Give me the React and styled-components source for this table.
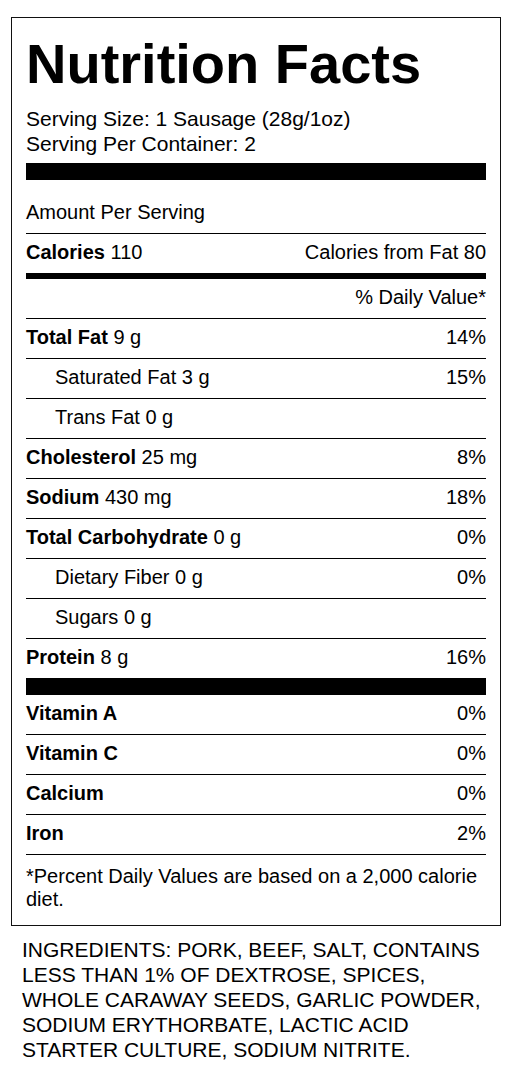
import React from 'react';
import styled, { createGlobalStyle } from 'styled-components';

const GlobalStyle = createGlobalStyle`
    html, body {
        margin: 0;
        padding: 0;
        background: #fff;
    }
    body {
        font-family: "Liberation Sans", Arial, sans-serif;
        color: #000;
    }
`

const Page = styled.div`
    padding: 17px 17px 20px 11px;
    width: 518px;
    box-sizing: border-box;
`

const Label = styled.section`
    width: 490px;
    box-sizing: border-box;
    border: 1px solid #111;
    padding: 18px 14px 14px;
`

const Title = styled.h1`
    margin: 0;
    font-size: 56px;
    line-height: 56px;
    font-weight: 700;
`

const Serving = styled.div`
    margin: 14px 0 7px;
    font-size: 21px;
    line-height: 25px;
`

const Bar = styled.div`
    height: ${p => p.h}px;
    background: #000;
`

const Row = styled.div`
    display: flex;
    justify-content: space-between;
    align-items: center;
    height: 37px;
    padding-bottom: 2px;
    padding-top: ${p => p.top || 0}px;
    padding-left: ${p => (p.indent ? 29 : 0)}px;
    border-bottom: ${p => (p.line === undefined ? 1 : p.line)}px solid #000;
    font-size: 20px;
`

const Name = styled.span`
    font-weight: ${p => (p.regular ? 400 : 700)};
`

const Note = styled.p`
    margin: 10px 0 0;
    font-size: 20px;
    line-height: 23px;
`

const Ingredients = styled.p`
    margin: 11px 0 0 11px;
    font-size: 21px;
    line-height: 25px;
`

const nutrients = [
    { name: 'Total Fat', amount: '9 g', dv: '14%' },
    { name: 'Saturated Fat', amount: '3 g', dv: '15%', indent: true },
    { name: 'Trans Fat', amount: '0 g', dv: '', indent: true },
    { name: 'Cholesterol', amount: '25 mg', dv: '8%' },
    { name: 'Sodium', amount: '430 mg', dv: '18%' },
    { name: 'Total Carbohydrate', amount: '0 g', dv: '0%' },
    { name: 'Dietary Fiber', amount: '0 g', dv: '0%', indent: true },
    { name: 'Sugars', amount: '0 g', dv: '', indent: true },
]

const vitamins = [
    { name: 'Vitamin A', dv: '0%' },
    { name: 'Vitamin C', dv: '0%' },
    { name: 'Calcium', dv: '0%' },
    { name: 'Iron', dv: '2%' },
]

export default function App() {
    return (
        <Page>
            <GlobalStyle />
            <Label>
                <Title>Nutrition Facts</Title>
                <Serving>
                    Serving Size: 1 Sausage (28g/1oz)<br />
                    Serving Per Container: 2
                </Serving>
                <Bar h={17} />
                <Row top={14}>
                    <span>Amount Per Serving</span>
                </Row>
                <Row line={6}>
                    <span><Name>Calories</Name> 110</span>
                    <span>Calories from Fat 80</span>
                </Row>
                <Row>
                    <span />
                    <span>% Daily Value*</span>
                </Row>
                {nutrients.map(n => (
                    <Row key={n.name} indent={n.indent}>
                        <span><Name regular={n.indent}>{n.name}</Name> {n.amount}</span>
                        <span>{n.dv}</span>
                    </Row>
                ))}
                <Row line={0}>
                    <span><Name>Protein</Name> 8 g</span>
                    <span>16%</span>
                </Row>
                <Bar h={17} />
                {vitamins.map(v => (
                    <Row key={v.name}>
                        <Name>{v.name}</Name>
                        <span>{v.dv}</span>
                    </Row>
                ))}
                <Note>*Percent Daily Values are based on a 2,000 calorie diet.</Note>
            </Label>
            <Ingredients>
                INGREDIENTS: PORK, BEEF, SALT, CONTAINS LESS THAN 1% OF DEXTROSE, SPICES,
                WHOLE CARAWAY SEEDS, GARLIC POWDER, SODIUM ERYTHORBATE, LACTIC ACID
                STARTER CULTURE, SODIUM NITRITE.
            </Ingredients>
        </Page>
    );
}
